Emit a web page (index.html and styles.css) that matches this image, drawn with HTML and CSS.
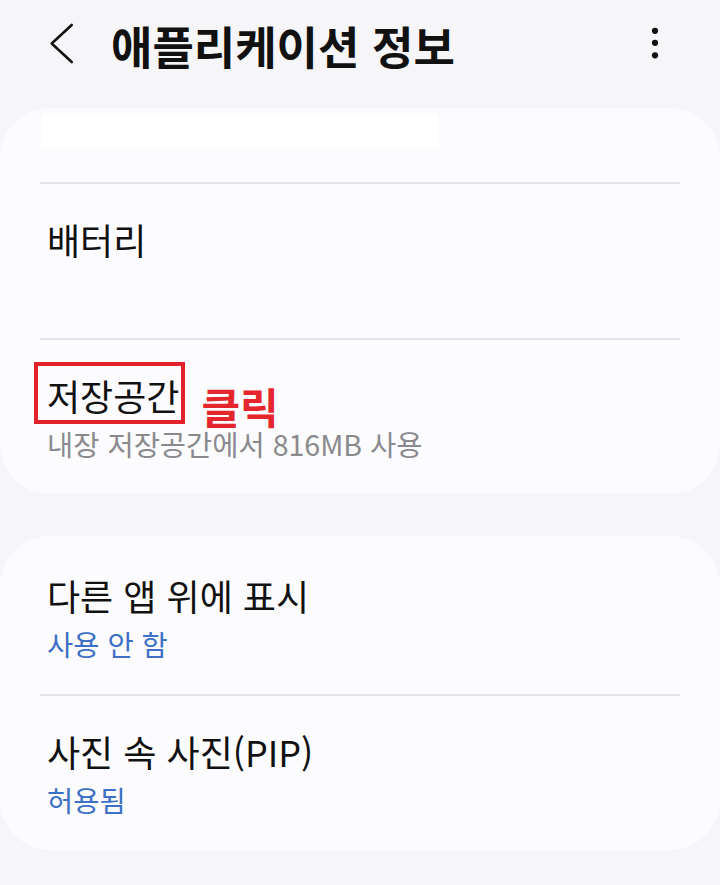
FILE: index.html
```html
<!DOCTYPE html>
<html lang="ko">
<head>
<meta charset="utf-8">
<title>애플리케이션 정보</title>
<link rel="stylesheet" href="styles.css">
</head>
<body>
<div class="screen">
  <header class="topbar">
    <svg class="back" width="30" height="48" viewBox="0 0 30 48" aria-hidden="true">
      <path d="M25.7 3 L5.7 21.5 L25.7 40" fill="none" stroke="#111" stroke-width="2.6" stroke-linecap="round" stroke-linejoin="round"/>
    </svg>
    <h1 class="title">애플리케이션 정보</h1>
    <svg class="more" width="20" height="48" viewBox="0 0 20 48" aria-hidden="true">
      <circle cx="10" cy="8.8" r="3.1" fill="#111"/>
      <circle cx="10" cy="20.8" r="3.1" fill="#111"/>
      <circle cx="10" cy="33.3" r="3.1" fill="#111"/>
    </svg>
  </header>

  <section class="card">
    <div class="row-redacted"><div class="redact"></div></div>
    <div class="divider"></div>
    <div class="row">
      <div class="row-title">배터리</div>
      <div class="row-sub">&nbsp;</div>
    </div>
    <div class="divider"></div>
    <div class="row">
      <div class="row-title">
        <span class="mark">저장공간</span>
        <span class="click">클릭</span>
      </div>
      <div class="row-sub gray">내장 저장공간에서 816MB 사용</div>
    </div>
  </section>

  <section class="card card-second">
    <div class="row">
      <div class="row-title">다른 앱 위에 표시</div>
      <div class="row-sub blue">사용 안 함</div>
    </div>
    <div class="divider"></div>
    <div class="row">
      <div class="row-title">사진 속 사진(PIP)</div>
      <div class="row-sub blue">허용됨</div>
    </div>
  </section>
</div>
</body>
</html>
```

FILE: styles.css
```css
* { box-sizing: border-box; }

html, body {
  margin: 0;
  padding: 0;
  background: #f6f6f8;
}

body {
  font-family: "Noto Sans CJK KR", "Noto Sans", sans-serif;
  color: #111111;
}

.screen {
  width: 720px;
  min-height: 885px;
  background: #f6f6f8;
}

.topbar {
  height: 92px;
  margin-bottom: 16px;
  padding: 0 55px 0 46px;
  display: flex;
  align-items: center;
}

.back, .more {
  display: block;
  flex: none;
}

.title {
  flex: 1;
  margin: 0 0 0 35px;
  font-size: 45px;
  line-height: 52px;
  font-weight: 700;
  letter-spacing: 0;
  color: #111111;
}

.card {
  background: #fcfcfe;
  border-radius: 50px;
  margin-bottom: 42px;
}

.card-second {
  padding-top: 4px;
}

.row-redacted {
  height: 74px;
  padding: 6px 0 0 42px;
}

.redact {
  width: 396px;
  height: 32px;
  background: #ffffff;
}

.divider {
  height: 2px;
  margin: 0 40px;
  background: #e4e4e7;
}

.row {
  padding: 32px 47px 34px;
}

.row-title {
  display: flex;
  align-items: flex-start;
  font-size: 36px;
  line-height: 46px;
  font-weight: 400;
  color: #111111;
}

.mark {
  position: relative;
}

.mark::after {
  content: "";
  position: absolute;
  top: -10px;
  bottom: -6px;
  left: -13px;
  right: -6px;
  border: 4px solid #e3212a;
}

.click {
  margin: 14px 0 -8px 22px;
  font-size: 42px;
  line-height: 40px;
  font-weight: 700;
  color: #e6262d;
}

.row-sub {
  margin-top: 10px;
  font-size: 28.5px;
  line-height: 32px;
  color: #8a8a8e;
}

.row-sub.gray {
  color: #8a8a8e;
}

.row-sub.blue {
  color: #3d6fc6;
}
```
